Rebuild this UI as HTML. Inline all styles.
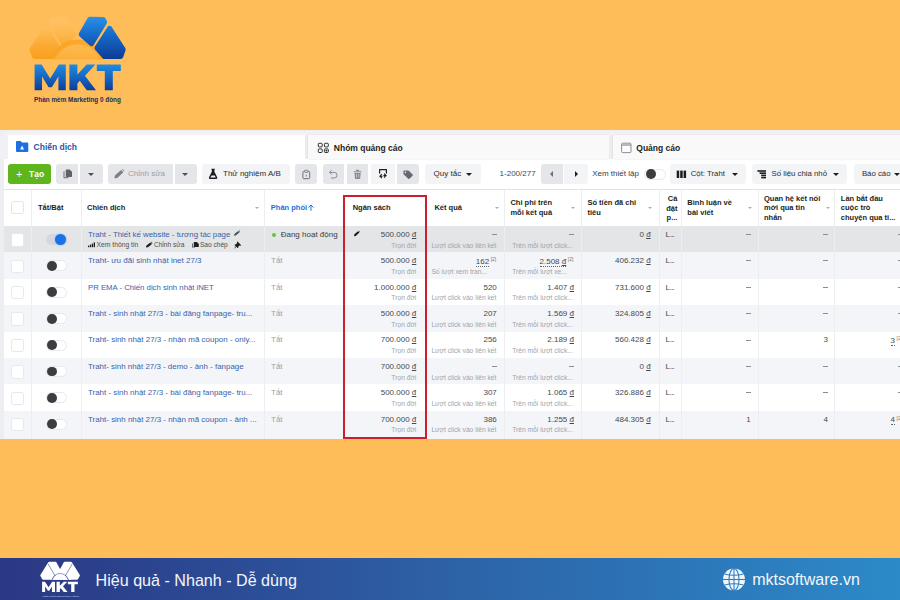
<!DOCTYPE html>
<html><head><meta charset="utf-8"><title>MKT</title>
<style>
*{box-sizing:border-box;margin:0;padding:0}
html,body{width:900px;height:600px;overflow:hidden}
body{background:#ffbd59;font-family:"Liberation Sans",sans-serif;position:relative;color:#1c1e21}
.abs,.t,.b,.s,.h,.btn,.cb,.tg,.rowbg,.vl{position:absolute}
.t,.b,.s,.h{white-space:nowrap;line-height:1}
.t{font-size:8px;color:#444950}
.lnk{color:#3b62a9}
.s{font-size:6.7px;color:#a0a4aa}
.h{font-size:7.5px;font-weight:bold;color:#1c1e21;line-height:9.6px}
.r{text-align:right}
.btn{top:163.8px;height:20.6px;border-radius:3px;background:#e5e6e9}
.btn.l{background:#f3f4f6}
.cb{left:10.8px;width:13.4px;height:13.4px;background:#fff;border:1px solid #e2e4e8;border-radius:2.5px}
.tg{left:45.5px;width:21px;height:11px;border-radius:6px;background:#fff;border:1px solid #e6e8eb}
.kn{position:absolute;width:9.8px;height:9.8px;border-radius:50%;background:#3c3d40;top:-0.4px;left:0.6px}
.rowbg{left:3.5px;right:0;height:26.4px}
.vl{width:1px;background:#eceef0;top:189.5px;height:249.3px}
u{text-decoration:underline;text-underline-offset:1px}
.dot{border-bottom:0.8px dotted #666;padding-bottom:0}
sup.q{font-size:5px;color:#777;vertical-align:2.5px;margin-left:1.5px}
.car{position:absolute;width:0;height:0;border-left:3px solid transparent;border-right:3px solid transparent;border-top:3.2px solid #1c1e21}
.hc{position:absolute;width:0;height:0;border-left:2px solid transparent;border-right:2px solid transparent;border-top:2.4px solid #a9adb3}
</style></head><body>

<svg class="abs" style="left:0;top:0" width="160" height="125" viewBox="0 0 160 125">
<defs>
<linearGradient id="gb" x1="0" y1="16" x2="0" y2="60" gradientUnits="userSpaceOnUse"><stop offset="0" stop-color="#2a93ea"/><stop offset="0.45" stop-color="#1668c6"/><stop offset="1" stop-color="#0b3a93"/></linearGradient>
<linearGradient id="go" x1="0" y1="18" x2="0" y2="59" gradientUnits="userSpaceOnUse"><stop offset="0" stop-color="#ffc56c" stop-opacity=".45"/><stop offset="0.35" stop-color="#fdb84d" stop-opacity=".8"/><stop offset="0.65" stop-color="#fbab33"/><stop offset="1" stop-color="#f99f1c"/></linearGradient>
<linearGradient id="gs" x1="0" y1="44" x2="0" y2="59" gradientUnits="userSpaceOnUse"><stop offset="0" stop-color="#fdba50"/><stop offset="1" stop-color="#fcb03c"/></linearGradient>
<linearGradient id="gt" x1="0" y1="64" x2="0" y2="91" gradientUnits="userSpaceOnUse"><stop offset="0" stop-color="#1f8de3"/><stop offset="0.5" stop-color="#1565c2"/><stop offset="1" stop-color="#0c3b95"/></linearGradient>
<clipPath id="cs"><rect x="20" y="10" width="120" height="49.2"/></clipPath>
</defs>
<!-- orange mirrored pieces -->
<g fill="url(#go)" stroke="url(#go)" stroke-width="5.4" stroke-linejoin="round">
<path d="M45.6 28.6 L32.2 49.4 L34.6 56.4 L50.6 56.4 L58 48 Z"/>
<path d="M65.2 19.4 L52.2 19.6 L50.8 22.2 L63.6 43.4 L73.8 34.4 Z"/>
</g>
<!-- halo + sun -->
<g clip-path="url(#cs)">
<circle cx="77.6" cy="68" r="28.5" fill="#f9a120" opacity=".8"/>
<circle cx="77.6" cy="68" r="23.8" fill="url(#gs)"/>
</g>
<!-- blue pieces -->
<g fill="url(#gb)" stroke="url(#gb)" stroke-width="5.4" stroke-linejoin="round">
<path d="M90 19.4 L103 19.6 L104.4 22.2 L91.6 43.4 L81.4 34.4 Z"/>
<path d="M109.6 28.6 L123 49.4 L120.6 56.4 L104.6 56.4 L97.2 48 Z"/>
</g>
<!-- MKT -->
<g fill="url(#gt)">
<path d="M34.6 90.2 V64.4 H41.6 L50.2 78.6 L58.8 64.4 H65.8 V90.2 H58.4 V76.6 L51.8 87.2 H48.6 L42 76.6 V90.2 Z"/>
<path d="M69.4 90.2 V64.4 H77.4 V74.6 L86.6 64.4 H95.4 L85 75.8 L96 90.2 H86.8 L79.8 80.8 L77.4 83.4 V90.2 Z"/>
<path d="M96.8 64.4 H120.8 V71 H112.8 V90.2 H104.8 V71 H96.8 Z"/>
</g>
<text x="34.1" y="102.2" font-family="Liberation Sans, sans-serif" font-weight="bold" font-size="6.6" fill="#1f2a5c" textLength="86.8" lengthAdjust="spacingAndGlyphs">Phần mềm Marketing 0 đồng</text>
</svg>

<div class="abs" style="left:0;top:129.6px;width:900px;height:309.2px;background:#fff"></div>
<div class="abs" style="left:0;top:129.6px;width:900px;height:5px;background:linear-gradient(#eeeef1,#f4f4f6)"></div>
<div class="abs" style="left:0;top:129.6px;width:3.5px;height:309.2px;background:#eceef1"></div>
<div class="abs" style="left:0;top:134.6px;width:7.5px;height:24.6px;background:#eff1f4"></div>
<div class="abs" style="left:7.5px;top:134.6px;width:297.5px;height:24.6px;background:#fff"></div>
<div class="abs" style="left:305px;top:134.6px;width:3px;height:24.6px;background:#ededf0"></div>
<div class="abs" style="left:308px;top:135.2px;width:301px;height:23.4px;background:#f9f9fa;box-shadow:0 0 1.5px rgba(0,0,0,.15)"></div>
<div class="abs" style="left:609px;top:134.6px;width:4px;height:24.6px;background:#ededf0"></div>
<div class="abs" style="left:613px;top:135.2px;width:290px;height:23.4px;background:#f9f9fa;box-shadow:0 0 1.5px rgba(0,0,0,.15)"></div>
<svg class="abs" style="left:0;top:130px" width="900" height="60" viewBox="0 130 900 60">
<!-- folder -->
<path d="M16 142 Q16 141 17 141 H20.6 L22 142.6 H27.3 Q28.3 142.6 28.3 143.6 V151 Q28.3 152 27.3 152 H17 Q16 152 16 151 Z" fill="#1d6fe3"/>
<path d="M22.1 145.6 L24 149.4 H20.2 Z" fill="#fff"/>
<!-- grid icon -->
<g fill="none" stroke="#2b2d31" stroke-width="1">
<rect x="318.3" y="143.3" width="3.9" height="3.6" rx=".8"/>
<rect x="324.4" y="143.3" width="3.9" height="3.6" rx=".8"/>
<rect x="318.3" y="148.9" width="3.9" height="3.6" rx=".8"/>
<rect x="324.4" y="148.9" width="3.9" height="3.6" rx=".8"/>
</g>
<rect x="325.6" y="149.9" width="1.6" height="1.6" fill="#2b2d31"/>
<!-- window icon -->
<rect x="621.6" y="143.2" width="9.4" height="9.4" rx="1" fill="#fbfbfc" stroke="#8c8f94" stroke-width="1"/>
<path d="M621.6 145 H631" stroke="#8c8f94" stroke-width="1.2"/>
</svg>

<div class="b abs" style="left:33.6px;top:143.1px;font-size:8.5px;font-weight:bold;color:#2c56a8">Chiến dịch</div>
<div class="b abs" style="left:333.8px;top:143.6px;font-size:8.5px;font-weight:bold;color:#1c1e21">Nhóm quảng cáo</div>
<div class="b abs" style="left:636.3px;top:143.6px;font-size:8.5px;font-weight:bold;color:#1c1e21">Quảng cáo</div>
<div class="btn" style="left:8px;width:43px;background:#5fb61c"></div>
<div class="b abs" style="left:16px;top:168.6px;font-size:11px;color:#fff;font-weight:normal">+</div>
<div class="b abs" style="left:29px;top:169.6px;font-size:8.5px;color:#fff;font-weight:bold">Tạo</div>
<div class="btn" style="left:56.3px;width:22px;border-radius:3px 0 0 3px"></div>
<div class="btn" style="left:80px;width:22.6px;border-radius:0 3px 3px 0"></div>
<div class="car" style="left:88px;top:172.8px;border-top-color:#4b4f56;border-left-width:3.3px;border-right-width:3.3px;border-top-width:3.5px"></div>
<div class="btn" style="left:108px;width:65px;border-radius:3px 0 0 3px"></div>
<div class="b abs" style="left:128px;top:169.8px;font-size:8px;color:#9a9ea5">Chỉnh sửa</div>
<div class="btn" style="left:175px;width:22.4px;border-radius:0 3px 3px 0"></div>
<div class="car" style="left:182.3px;top:172.8px;border-top-color:#4b4f56;border-left-width:3.3px;border-right-width:3.3px;border-top-width:3.5px"></div>
<div class="btn l" style="left:202px;width:88px"></div>
<div class="b abs" style="left:223px;top:169.8px;font-size:8px;color:#2a2c30">Thử nghiệm A/B</div>
<div class="btn" style="left:294.9px;width:22.2px"></div>
<div class="btn" style="left:322.9px;width:21.5px;border-radius:3px 0 0 3px"></div>
<div class="btn" style="left:346.6px;width:21.8px;border-radius:0"></div>
<div class="btn l" style="left:370.6px;width:24px;border-radius:0"></div>
<div class="btn" style="left:397.2px;width:22.2px;border-radius:0 3px 3px 0"></div>
<div class="btn l" style="left:424.9px;width:55.8px"></div>
<div class="b abs" style="left:433.6px;top:169.8px;font-size:8px;color:#2a2c30">Quy tắc</div>
<div class="car" style="left:466.2px;top:173px"></div>
<div class="b abs" style="left:499.6px;top:169.8px;font-size:8px;color:#444950">1-200/277</div>
<div class="btn" style="left:541px;width:22.4px;border-radius:3px 0 0 3px"></div>
<div class="btn l" style="left:564.4px;width:23.2px;border-radius:0 3px 3px 0"></div>
<div class="abs" style="left:549.6px;top:171px;width:0;height:0;border-top:3px solid transparent;border-bottom:3px solid transparent;border-right:3.4px solid #6a6e75"></div>
<div class="abs" style="left:574.6px;top:171px;width:0;height:0;border-top:3px solid transparent;border-bottom:3px solid transparent;border-left:3.4px solid #1c1e21"></div>
<div class="b abs" style="left:592.2px;top:169.8px;font-size:8px;color:#3a3d42">Xem thiết lập</div>
<div class="tg" style="left:644.2px;top:168.5px;width:21.6px"><div class="kn"></div></div>
<div class="btn l" style="left:670.2px;width:75.8px"></div>
<div class="b abs" style="left:690.7px;top:169.8px;font-size:7.8px;color:#2a2c30">Cột: Traht</div>
<div class="car" style="left:731.6px;top:173px"></div>
<div class="btn l" style="left:751.5px;width:95.2px"></div>
<div class="b abs" style="left:771.5px;top:169.8px;font-size:7.8px;color:#2a2c30">Số liệu chia nhỏ</div>
<div class="car" style="left:833px;top:173px"></div>
<div class="btn l" style="left:853.9px;width:60px"></div>
<div class="b abs" style="left:861.9px;top:169.8px;font-size:7.8px;color:#2a2c30">Báo cáo</div>
<div class="car" style="left:894.2px;top:173px"></div>
<svg class="abs" style="left:0;top:160px" width="900" height="30" viewBox="0 160 900 30">
<!-- copy -->
<path d="M63.4 171.2 H64.6 V177 H68.4 V178.2 H64.2 Q63.4 178.2 63.4 177.4 Z" fill="#7d8187"/>
<path d="M65.8 170.2 Q65.8 169.4 66.6 169.4 H69.6 L72 171.8 V176.2 Q72 177 71.2 177 H66.6 Q65.8 177 65.8 176.2 Z" fill="#5d6167"/>
<!-- pencil (edit) -->
<path d="M114.4 178.3 L114.9 175.6 L121.1 169.9 L123.4 172.2 L117.2 177.9 Z M122 169.3 Q122.6 168.8 123.2 169.4 L124 170.2 Q124.5 170.8 123.9 171.4 L123.9 171.4 Z" fill="#7c7f85"/>
<!-- flask -->
<path d="M211.4 168.8 H214.8 V169.7 H214.4 V171.8 L217.2 177.2 Q217.8 178.9 216.2 179 H210 Q208.4 178.9 209 177.2 L211.8 171.8 V169.7 H211.4 Z" fill="#1c1e21"/>
<path d="M211.6 175.4 H214.6 L215.8 177.6 H210.4 Z" fill="#f3f4f6"/>
<!-- clipboard -->
<rect x="302.9" y="171.4" width="6.8" height="7.3" rx="1" fill="none" stroke="#6b6e74" stroke-width="1"/>
<rect x="304.7" y="170.2" width="3.2" height="2.2" rx=".6" fill="#e5e7ea" stroke="#6b6e74" stroke-width=".8"/>
<path d="M306.3 174.6 V176.6" stroke="#6b6e74" stroke-width=".8"/>
<!-- undo -->
<path d="M329.6 172.4 H334.2 Q337 172.4 337 175.2 Q337 178 334.2 178 H331" fill="none" stroke="#888b91" stroke-width="1"/>
<path d="M331.6 170.4 L329.4 172.4 L331.6 174.4" fill="none" stroke="#888b91" stroke-width="1"/>
<!-- trash -->
<path d="M353.8 171.2 H361.4 V172.3 H353.8 Z M356.2 169.8 H359 V171 H356.2 Z M354.5 172.9 H360.7 L360.2 178.2 Q360.1 179 359.3 179 H355.9 Q355.1 179 355 178.2 Z" fill="#85888e"/>
<path d="M356.5 174 V177.6 M358.7 174 V177.6" stroke="#e5e7ea" stroke-width=".6"/>
<!-- export -->
<path d="M379.6 173.4 V169.6 H386.4 V173.4" fill="none" stroke="#1c1e21" stroke-width="1.2" stroke-linejoin="round"/>
<path d="M381.9 174.2 L379.9 176.2 L381.9 178.2 M379.9 176.2 H382.6" fill="none" stroke="#1c1e21" stroke-width="1.05"/>
<path d="M384.1 173.6 L386.1 175.6 L384.1 177.6 M386.1 175.6 H383.4" fill="none" stroke="#1c1e21" stroke-width="1.05"/>
<!-- tag -->
<path d="M403.4 171.2 Q403.4 170.4 404.2 170.4 H407.8 Q408.4 170.4 408.8 170.8 L412.6 174.6 Q413.2 175.2 412.6 175.8 L409.4 178.8 Q408.8 179.3 408.2 178.8 L403.8 174.4 Q403.4 174 403.4 173.6 Z" fill="#65686e"/>
<circle cx="405.4" cy="172.4" r=".8" fill="#e5e7ea"/>
<!-- columns icon -->
<rect x="676.7" y="170.6" width="2.5" height="7.4" fill="#1c1e21"/>
<rect x="680.2" y="170.6" width="2.5" height="7.4" fill="#1c1e21"/>
<rect x="683.6" y="170.6" width="2.5" height="7.4" fill="#1c1e21"/>
<!-- breakdown icon -->
<rect x="757.4" y="170.2" width="8.6" height="1.6" fill="#1c1e21"/>
<rect x="759.6" y="172.4" width="6.4" height="1.6" fill="#1c1e21"/>
<rect x="761.2" y="174.6" width="4.8" height="1.6" fill="#1c1e21"/>
<rect x="761.2" y="176.8" width="4.8" height="1.6" fill="#1c1e21"/>
</svg>

<div class="abs" style="left:3.5px;top:188.7px;width:897px;height:1px;background:#dfe2e6"></div>
<div class="rowbg" style="top:226.0px;height:26.4px;background:#e4e5e7"></div>
<div class="rowbg" style="top:252.4px;height:26.4px;background:#f3f5f8"></div>
<div class="rowbg" style="top:278.8px;height:26.4px;background:#ffffff"></div>
<div class="rowbg" style="top:305.2px;height:26.4px;background:#f3f5f8"></div>
<div class="rowbg" style="top:331.6px;height:26.4px;background:#ffffff"></div>
<div class="rowbg" style="top:358.0px;height:26.4px;background:#f3f5f8"></div>
<div class="rowbg" style="top:384.4px;height:26.4px;background:#ffffff"></div>
<div class="rowbg" style="top:410.8px;height:28.0px;background:#f3f5f8"></div>
<div class="vl" style="left:30.5px"></div>
<div class="vl" style="left:81px"></div>
<div class="vl" style="left:264px"></div>
<div class="vl" style="left:504px"></div>
<div class="vl" style="left:581.3px"></div>
<div class="vl" style="left:658.9px"></div>
<div class="vl" style="left:680.7px"></div>
<div class="vl" style="left:758px"></div>
<div class="vl" style="left:834.2px"></div>
<div class="cb" style="top:200.8px"></div>
<div class="h" style="left:38px;top:203.3px">Tắt/Bật</div>
<div class="h" style="left:87px;top:203.3px">Chiến dịch</div>
<div class="hc" style="left:255.4px;top:207px"></div>
<div class="h" style="left:270.8px;top:203.3px;color:#1e6fd9">Phân phối</div>
<svg class="abs" style="left:307px;top:203px" width="9" height="10" viewBox="307 203 9 10"><path d="M311 210.8 V205.2 M308.5 207.6 L311 205 L313.5 207.6" fill="none" stroke="#1e6fd9" stroke-width="0.95"/></svg>
<div class="h" style="left:352.7px;top:203.3px">Ngân sách</div>
<div class="h" style="left:434.4px;top:203.3px">Kết quả</div>
<div class="hc" style="left:495.3px;top:207px"></div>
<div class="h" style="left:510.4px;top:198.3px">Chi phí trên<br>mỗi kết quả</div>
<div class="hc" style="left:571.3px;top:207px"></div>
<div class="h" style="left:587.4px;top:198.3px">Số tiền đã chi<br>tiêu</div>
<div class="hc" style="left:648.4px;top:207px"></div>
<div class="h" style="left:664px;top:194.2px;width:13.4px;text-align:right;line-height:9.4px">Cà<br>đặt<br>p...</div>
<div class="h" style="left:687.3px;top:198.3px">Bình luận về<br>bài viết</div>
<div class="hc" style="left:748.4px;top:207px"></div>
<div class="h" style="left:764px;top:194.2px;line-height:9.2px">Quan hệ kết nối<br>mới qua tin<br>nhắn</div>
<div class="hc" style="left:825.5px;top:207px"></div>
<div class="h" style="left:840.8px;top:194.2px;line-height:9.2px">Lần bắt đầu<br>cuộc trò<br>chuyện qua ti...</div>
<div class="cb" style="top:233.2px;border-color:#e6e8ec"></div>
<div class="tg" style="top:234.0px;background:#d5d9df;border-color:#d5d9df"><div class="kn" style="left:auto;right:-0.2px;top:-1px;width:11px;height:11px;background:#1b74e4;box-shadow:0 0 2px #7fb0f0"></div></div>
<div class="t lnk" style="left:88px;top:230.7px;font-size:7.86px">Traht - Thiết kế website - tương tác page</div>
<div class="abs" style="left:271.7px;top:232.9px;width:4px;height:4px;border-radius:50%;background:#6cbf47"></div>
<div class="t" style="left:280.7px;top:230.7px;color:#3a3d42">Đang hoạt động</div>
<div class="t r" style="right:483.7px;top:230.7px">500.000 <u>đ</u></div>
<div class="s r" style="right:483.7px;top:242.6px">Trọn đời</div>
<div class="abs" style="left:492px;top:234.0px;width:4.6px;height:0.9px;background:#8a8d93"></div>
<div class="s" style="left:431.4px;top:242.6px">Lượt click vào liên kết</div>
<div class="abs" style="left:569.4px;top:234.0px;width:4.6px;height:0.9px;background:#8a8d93"></div>
<div class="s" style="left:512.2px;top:242.6px">Trên mỗi lượt click...</div>
<div class="t r" style="right:249.39999999999998px;top:230.7px">0 <u>đ</u></div>
<div class="t" style="left:665.4px;top:230.7px">L<span style="letter-spacing:-0.9px">...</span></div>
<div class="abs" style="left:745.8000000000001px;top:234.0px;width:4.8px;height:0.9px;background:#8a8d93"></div>
<div class="abs" style="left:823.2px;top:234.0px;width:4.8px;height:0.9px;background:#8a8d93"></div>
<div class="abs" style="left:898px;top:234.0px;width:4px;height:0.9px;background:#8a8d93"></div>
<div class="cb" style="top:259.6px;border-color:#e6e8ec"></div>
<div class="tg" style="top:260.4px"><div class="kn"></div></div>
<div class="t lnk" style="left:88px;top:257.1px;font-size:8px">Traht- ưu đãi sinh nhật inet 27/3</div>
<div class="t" style="left:271px;top:257.1px;color:#9da1a8">Tắt</div>
<div class="t r" style="right:483.7px;top:257.1px">500.000 <u>đ</u></div>
<div class="s r" style="right:483.7px;top:269.0px">Trọn đời</div>
<div class="t r" style="right:403.8px;top:257.1px"><span class="dot">162</span><sup class="q">[2]</sup></div>
<div class="s" style="left:431.4px;top:269.0px">Số lượt xem tran...</div>
<div class="t r" style="right:326.70000000000005px;top:257.1px"><span class="dot">2.508 <u>đ</u></span><sup class="q">[2]</sup></div>
<div class="s" style="left:512.2px;top:269.0px">Trên mỗi lượt xe...</div>
<div class="t r" style="right:249.39999999999998px;top:257.1px">406.232 <u>đ</u></div>
<div class="t" style="left:665.4px;top:257.1px">L<span style="letter-spacing:-0.9px">...</span></div>
<div class="abs" style="left:745.8000000000001px;top:260.4px;width:4.8px;height:0.9px;background:#8a8d93"></div>
<div class="abs" style="left:823.2px;top:260.4px;width:4.8px;height:0.9px;background:#8a8d93"></div>
<div class="abs" style="left:898px;top:260.4px;width:4px;height:0.9px;background:#8a8d93"></div>
<div class="cb" style="top:286.0px;border-color:#e6e8ec"></div>
<div class="tg" style="top:286.8px"><div class="kn"></div></div>
<div class="t lnk" style="left:88px;top:283.5px;font-size:7.76px">PR EMA - Chiến dịch sinh nhật iNET</div>
<div class="t" style="left:271px;top:283.5px;color:#9da1a8">Tắt</div>
<div class="t r" style="right:483.7px;top:283.5px">1.000.000 <u>đ</u></div>
<div class="s r" style="right:483.7px;top:295.4px">Trọn đời</div>
<div class="t r" style="right:403.2px;top:283.5px">520</div>
<div class="s" style="left:431.4px;top:295.4px">Lượt click vào liên kết</div>
<div class="t r" style="right:326px;top:283.5px">1.407 <u>đ</u></div>
<div class="s" style="left:512.2px;top:295.4px">Trên mỗi lượt click...</div>
<div class="t r" style="right:249.39999999999998px;top:283.5px">731.600 <u>đ</u></div>
<div class="t" style="left:665.4px;top:283.5px">L<span style="letter-spacing:-0.9px">...</span></div>
<div class="abs" style="left:745.8000000000001px;top:286.8px;width:4.8px;height:0.9px;background:#8a8d93"></div>
<div class="abs" style="left:823.2px;top:286.8px;width:4.8px;height:0.9px;background:#8a8d93"></div>
<div class="abs" style="left:898px;top:286.8px;width:4px;height:0.9px;background:#8a8d93"></div>
<div class="cb" style="top:312.4px;border-color:#e6e8ec"></div>
<div class="tg" style="top:313.2px"><div class="kn"></div></div>
<div class="t lnk" style="left:88px;top:309.9px;font-size:7.95px">Traht - sinh nhật 27/3 - bài đăng fanpage- tru...</div>
<div class="t" style="left:271px;top:309.9px;color:#9da1a8">Tắt</div>
<div class="t r" style="right:483.7px;top:309.9px">500.000 <u>đ</u></div>
<div class="s r" style="right:483.7px;top:321.8px">Trọn đời</div>
<div class="t r" style="right:403.2px;top:309.9px">207</div>
<div class="s" style="left:431.4px;top:321.8px">Lượt click vào liên kết</div>
<div class="t r" style="right:326px;top:309.9px">1.569 <u>đ</u></div>
<div class="s" style="left:512.2px;top:321.8px">Trên mỗi lượt click...</div>
<div class="t r" style="right:249.39999999999998px;top:309.9px">324.805 <u>đ</u></div>
<div class="t" style="left:665.4px;top:309.9px">L<span style="letter-spacing:-0.9px">...</span></div>
<div class="abs" style="left:745.8000000000001px;top:313.2px;width:4.8px;height:0.9px;background:#8a8d93"></div>
<div class="abs" style="left:823.2px;top:313.2px;width:4.8px;height:0.9px;background:#8a8d93"></div>
<div class="abs" style="left:898px;top:313.2px;width:4px;height:0.9px;background:#8a8d93"></div>
<div class="cb" style="top:338.8px;border-color:#e6e8ec"></div>
<div class="tg" style="top:339.6px"><div class="kn"></div></div>
<div class="t lnk" style="left:88px;top:336.3px;font-size:7.98px">Traht- sinh nhật 27/3 - nhận mã coupon - only...</div>
<div class="t" style="left:271px;top:336.3px;color:#9da1a8">Tắt</div>
<div class="t r" style="right:483.7px;top:336.3px">700.000 <u>đ</u></div>
<div class="s r" style="right:483.7px;top:348.2px">Trọn đời</div>
<div class="t r" style="right:403.2px;top:336.3px">256</div>
<div class="s" style="left:431.4px;top:348.2px">Lượt click vào liên kết</div>
<div class="t r" style="right:326px;top:336.3px">2.189 <u>đ</u></div>
<div class="s" style="left:512.2px;top:348.2px">Trên mỗi lượt click...</div>
<div class="t r" style="right:249.39999999999998px;top:336.3px">560.428 <u>đ</u></div>
<div class="t" style="left:665.4px;top:336.3px">L<span style="letter-spacing:-0.9px">...</span></div>
<div class="abs" style="left:745.8000000000001px;top:339.6px;width:4.8px;height:0.9px;background:#8a8d93"></div>
<div class="t r" style="right:72px;top:336.3px">3</div>
<div class="t" style="left:890.6px;top:336.3px"><span class="dot">3</span><sup class="q">[2]</sup></div>
<div class="cb" style="top:365.2px;border-color:#e6e8ec"></div>
<div class="tg" style="top:366.0px"><div class="kn"></div></div>
<div class="t lnk" style="left:88px;top:362.7px;font-size:7.93px">Traht- sinh nhật 27/3 - demo - ảnh - fanpage</div>
<div class="t" style="left:271px;top:362.7px;color:#9da1a8">Tắt</div>
<div class="t r" style="right:483.7px;top:362.7px">700.000 <u>đ</u></div>
<div class="s r" style="right:483.7px;top:374.6px">Trọn đời</div>
<div class="abs" style="left:492px;top:366.0px;width:4.6px;height:0.9px;background:#8a8d93"></div>
<div class="s" style="left:431.4px;top:374.6px">Lượt click vào liên kết</div>
<div class="abs" style="left:569.4px;top:366.0px;width:4.6px;height:0.9px;background:#8a8d93"></div>
<div class="s" style="left:512.2px;top:374.6px">Trên mỗi lượt click...</div>
<div class="t r" style="right:249.39999999999998px;top:362.7px">0 <u>đ</u></div>
<div class="t" style="left:665.4px;top:362.7px">L<span style="letter-spacing:-0.9px">...</span></div>
<div class="abs" style="left:745.8000000000001px;top:366.0px;width:4.8px;height:0.9px;background:#8a8d93"></div>
<div class="abs" style="left:823.2px;top:366.0px;width:4.8px;height:0.9px;background:#8a8d93"></div>
<div class="abs" style="left:898px;top:366.0px;width:4px;height:0.9px;background:#8a8d93"></div>
<div class="cb" style="top:391.6px;border-color:#e6e8ec"></div>
<div class="tg" style="top:392.4px"><div class="kn"></div></div>
<div class="t lnk" style="left:88px;top:389.1px;font-size:7.95px">Traht - sinh nhật 27/3 - bài đăng fanpage- tru...</div>
<div class="t" style="left:271px;top:389.1px;color:#9da1a8">Tắt</div>
<div class="t r" style="right:483.7px;top:389.1px">500.000 <u>đ</u></div>
<div class="s r" style="right:483.7px;top:401.0px">Trọn đời</div>
<div class="t r" style="right:403.2px;top:389.1px">307</div>
<div class="s" style="left:431.4px;top:401.0px">Lượt click vào liên kết</div>
<div class="t r" style="right:326px;top:389.1px">1.065 <u>đ</u></div>
<div class="s" style="left:512.2px;top:401.0px">Trên mỗi lượt click...</div>
<div class="t r" style="right:249.39999999999998px;top:389.1px">326.886 <u>đ</u></div>
<div class="t" style="left:665.4px;top:389.1px">L<span style="letter-spacing:-0.9px">...</span></div>
<div class="abs" style="left:745.8000000000001px;top:392.4px;width:4.8px;height:0.9px;background:#8a8d93"></div>
<div class="abs" style="left:823.2px;top:392.4px;width:4.8px;height:0.9px;background:#8a8d93"></div>
<div class="abs" style="left:898px;top:392.4px;width:4px;height:0.9px;background:#8a8d93"></div>
<div class="cb" style="top:418.0px;border-color:#e6e8ec"></div>
<div class="tg" style="top:418.8px"><div class="kn"></div></div>
<div class="t lnk" style="left:88px;top:415.5px;font-size:7.96px">Traht- sinh nhật 27/3 - nhận mã coupon - ảnh ...</div>
<div class="t" style="left:271px;top:415.5px;color:#9da1a8">Tắt</div>
<div class="t r" style="right:483.7px;top:415.5px">700.000 <u>đ</u></div>
<div class="s r" style="right:483.7px;top:427.4px">Trọn đời</div>
<div class="t r" style="right:403.2px;top:415.5px">386</div>
<div class="s" style="left:431.4px;top:427.4px">Lượt click vào liên kết</div>
<div class="t r" style="right:326px;top:415.5px">1.255 <u>đ</u></div>
<div class="s" style="left:512.2px;top:427.4px">Trên mỗi lượt click...</div>
<div class="t r" style="right:249.39999999999998px;top:415.5px">484.305 <u>đ</u></div>
<div class="t" style="left:665.4px;top:415.5px">L<span style="letter-spacing:-0.9px">...</span></div>
<div class="t r" style="right:149.39999999999998px;top:415.5px">1</div>
<div class="t r" style="right:72px;top:415.5px">4</div>
<div class="t" style="left:890.6px;top:415.5px"><span class="dot">4</span><sup class="q">[2]</sup></div>
<svg class="abs" style="left:80px;top:226px" width="290" height="28" viewBox="80 226 290 28">
<!-- pencil after title -->
<path d="M234 235.8 L234.4 233.9 L238.2 230.9 L239.6 232.3 L235.8 235.5 Z M238.7 230.5 Q239.1 230.2 239.5 230.6 L240 231.1 Q240.3 231.5 239.9 231.9 Z" fill="#4b4f56"/>
<!-- bars -->
<rect x="88" y="245.6" width="1.3" height="1.6" fill="#1c1e21"/>
<rect x="89.9" y="244.6" width="1.3" height="2.6" fill="#1c1e21"/>
<rect x="91.8" y="243.6" width="1.3" height="3.6" fill="#1c1e21"/>
<rect x="93.7" y="242.4" width="1.3" height="4.8" fill="#1c1e21"/>
<!-- pencil -->
<path d="M146 247.6 L146.4 245.6 L150.4 242.4 L152 244 L148 247.2 Z M150.9 242 Q151.3 241.7 151.7 242.1 L152.3 242.7 Q152.6 243.1 152.2 243.5 Z" fill="#1c1e21"/>
<!-- copy -->
<path d="M192 243.4 H192.8 V246.8 H195 V247.6 H192.6 Q192 247.6 192 247 Z" fill="#4b4f56"/>
<path d="M193.8 242.6 Q193.8 242 194.4 242 H196.8 L198.8 244 V246.4 Q198.8 247 198.2 247 H194.4 Q193.8 247 193.8 246.4 Z" fill="#1c1e21"/>
<!-- pin -->
<path d="M237.6 241.6 L241.2 245.2 L240.4 245.8 L239.6 245.4 L238.4 246.6 L238.2 247.8 L237.4 248 L236.4 246.8 L234.4 248.4 L234.2 248.2 L235.8 246.2 L234.6 245.2 L234.8 244.4 L236 244.2 L237.2 243 L236.8 242.2 Z" fill="#1c1e21"/>
<!-- budget pencil -->
<path d="M354 236.3 L354.4 234.3 L358 231.2 L359.4 232.6 L355.8 235.9 Z M358.5 230.8 Q358.9 230.5 359.3 230.9 L359.8 231.4 Q360.1 231.8 359.7 232.2 Z" fill="#1c1e21"/>
</svg>

<div class="s" style="left:96.5px;top:242.4px;color:#4b4f56;font-size:6.75px">Xem thông tin</div>
<div class="s" style="left:153.9px;top:242.4px;color:#4b4f56;font-size:6.6px">Chỉnh sửa</div>
<div class="s" style="left:199.9px;top:242.4px;color:#4b4f56;font-size:6.6px">Sao chép</div>
<div class="abs" style="left:342.5px;top:195.2px;width:84px;height:243.7px;border:2.4px solid #cb1f2d"></div>
<div class="abs" style="left:0;top:557.8px;width:900px;height:42.2px;background:linear-gradient(90deg,#2b3883 0%,#2c4d97 28%,#2d62a6 50%,#2c76b8 75%,#2c8ac8 100%)"></div>
<svg class="abs" style="left:30px;top:556px" width="70" height="44" viewBox="30 556 70 44">
<g fill="#fff" stroke="#fff" stroke-width="2.6" stroke-linejoin="round">
<!-- left hexagon -->
<path d="M49.4 563 L55.4 563 L60.2 572 L56 578.4 L43.2 578.4 L41.6 575.4 Z"/>
<!-- right hexagon -->
<path d="M70.8 563 L64.8 563 L60 572 L64.2 578.4 L77 578.4 L78.6 575.4 Z"/>
</g>
<rect x="50" y="572" width="21" height="7.7" fill="#fff"/>
<g fill="none" stroke="#27398c" stroke-width="0.55" stroke-linecap="round">
<path d="M48.3 564.2 L54.9 575.6"/>
<path d="M72.1 564.2 L65.5 575.6"/>
<path d="M52.2 579.4 A8.4 8.4 0 0 1 68.2 579.4" stroke-width="0.5"/>
<path d="M54.9 575.6 L52 579.4 M65.5 575.6 L68.4 579.4" stroke-width="0.45"/>
</g>
<path d="M53.6 579.7 A7 7 0 0 1 66.8 579.7 Z" fill="#fff"/>
<g fill="#fff">
<g transform="translate(27.75 556.3) scale(0.4146 0.3953)">
<path d="M34.6 90.2 V64.4 H41.6 L50.2 78.6 L58.8 64.4 H65.8 V90.2 H58.4 V76.6 L51.8 87.2 H48.6 L42 76.6 V90.2 Z"/>
<path d="M69.4 90.2 V64.4 H77.4 V74.6 L86.6 64.4 H95.4 L85 75.8 L96 90.2 H86.8 L79.8 80.8 L77.4 83.4 V90.2 Z"/>
<path d="M96.8 64.4 H120.8 V71 H112.8 V90.2 H104.8 V71 H96.8 Z"/>
</g>
</g>
<text x="42.2" y="597.2" font-family="Liberation Sans, sans-serif" font-weight="bold" font-size="2.2" fill="#b9c6ea" opacity=".85" textLength="36.6" lengthAdjust="spacingAndGlyphs">Phần mềm Marketing 0 đồng</text>
</svg>
<!-- globe -->
<svg class="abs" style="left:720px;top:566px" width="28" height="28" viewBox="720 566 28 28">
<circle cx="734" cy="579.5" r="11" fill="#f3f7fc"/>
<g fill="none" stroke="#2c7fc4" stroke-width="1.1">
<ellipse cx="734" cy="579.5" rx="5" ry="11"/>
<path d="M734 568.5 V590.5"/>
<path d="M723 579.5 H745"/>
<path d="M724.6 574 Q734 576.6 743.4 574"/>
<path d="M724.6 585 Q734 582.4 743.4 585"/>
</g>
</svg>

<div class="b abs" style="left:95.6px;top:571.6px;font-size:16.1px;color:#f4f6fb">Hiệu quả - Nhanh - Dễ dùng</div>
<div class="b abs" style="left:752.2px;top:571.6px;font-size:16px;color:#f4f6fb">mktsoftware.vn</div>
</body></html>
